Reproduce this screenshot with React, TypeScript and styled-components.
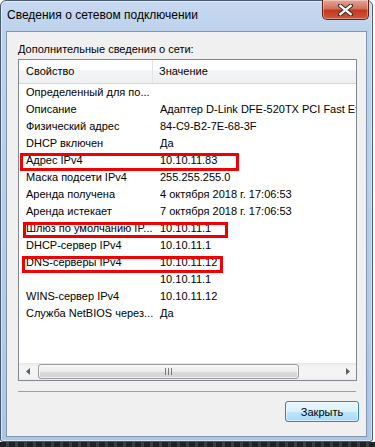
import React from "react";
import styled, { createGlobalStyle } from "styled-components";

const GlobalStyle = createGlobalStyle`
  html, body {
    margin: 0;
    padding: 0;
  }
  body {
    font-family: "Liberation Sans", Arial, sans-serif;
    font-size: 11px;
    color: #000;
    background: #fff;
  }
`;

const Screen = styled.div`
  width: 375px;
  height: 447px;
  display: flex;
  flex-direction: column;
  background: #fff;
  overflow: hidden;
`;

const Window = styled.div`
  width: 373px;
  height: 442px;
  box-sizing: border-box;
  border: 1px solid #4a5a6e;
  border-radius: 6px 6px 3px 3px;
  background: linear-gradient(to bottom, #c6d9f0 0px, #bed2ec 30px, #aec6e6 100%);
  box-shadow: inset 0 0 0 1px rgba(255, 255, 255, 0.5);
  display: flex;
  flex-direction: column;
`;

const Desktop = styled.div`
  flex: 1;
  background: repeating-linear-gradient(90deg, #1f2226 0 6px, #3a3f44 6px 9px);
`;

const TitleBar = styled.div`
  height: 30px;
  display: flex;
  justify-content: space-between;
  align-items: flex-start;
`;

const Title = styled.div`
  padding: 7px 0 0 6px;
  line-height: 15px;
  font-size: 12px;
  color: #000;
`;

const CloseBox = styled.div`
  width: 47px;
  height: 20px;
  margin: -1px 3px 0 0;
  box-sizing: border-box;
  border: 1px solid #5a231c;
  border-top: none;
  border-radius: 0 0 5px 5px;
  background: linear-gradient(to bottom, #e8a493 0%, #d2705c 45%, #c2391f 55%, #d0583c 100%);
  box-shadow: inset 0 0 0 1px rgba(255, 255, 255, 0.35);
  display: flex;
  align-items: center;
  justify-content: center;
`;

const Client = styled.div`
  flex: 1;
  margin: 0 5px 4px 5px;
  border: 1px solid #8195ad;
  background: #f0f0f0;
  display: flex;
  flex-direction: column;
  padding: 10px 8px 14px 11px;
`;

const Caption = styled.div`
  line-height: 15px;
  margin-bottom: 2px;
`;

const ListBox = styled.div`
  height: 322px;
  margin-right: 1px;
  box-sizing: border-box;
  border: 1px solid #828790;
  background: #fff;
  display: flex;
  flex-direction: column;
`;

const Header = styled.div`
  height: 24px;
  box-sizing: border-box;
  display: flex;
  border-bottom: 1px solid #d5d5d5;
  background: linear-gradient(to bottom, #ffffff 0%, #ffffff 45%, #f3f4f6 46%, #eff0f2 100%);
`;

const HeadCell = styled.div<{ $first?: boolean }>`
  line-height: 23px;
  box-sizing: border-box;
  width: ${(p) => (p.$first ? "134px" : "auto")};
  flex: ${(p) => (p.$first ? "none" : "1")};
  padding-left: ${(p) => (p.$first ? "7px" : "6px")};
  border-right: ${(p) => (p.$first ? "1px solid #e3e5e8" : "none")};
`;

const Body = styled.div`
  flex: 1;
  position: relative;
  overflow: hidden;
`;

const Row = styled.div`
  height: 17px;
  display: flex;
  position: relative;
  white-space: nowrap;
`;

const Cell = styled.div<{ $first?: boolean }>`
  line-height: 17px;
  box-sizing: border-box;
  width: ${(p) => (p.$first ? "134px" : "auto")};
  flex: ${(p) => (p.$first ? "none" : "1")};
  padding-left: ${(p) => (p.$first ? "7px" : "7px")};
  overflow: ${(p) => (p.$first ? "hidden" : "visible")};
`;

const Mark = styled.div<{ $left: number; $width: number; $top: number; $height: number }>`
  position: absolute;
  left: ${(p) => p.$left}px;
  top: ${(p) => p.$top}px;
  width: ${(p) => p.$width}px;
  height: ${(p) => p.$height}px;
  box-sizing: border-box;
  border: 3px solid #f00000;
  pointer-events: none;
`;

const HScroll = styled.div`
  height: 17px;
  display: flex;
  background: linear-gradient(to bottom, #e6e6e6 0%, #f4f4f4 20%, #f4f4f4 80%, #ececec 100%);
`;

const Arrow = styled.div`
  width: 17px;
  display: flex;
  align-items: center;
  justify-content: center;
`;

const Track = styled.div`
  flex: 1;
  display: flex;
  align-items: center;
  padding-left: 2px;
`;

const Thumb = styled.div<{ $width: number }>`
  width: ${(p) => p.$width}px;
  height: 15px;
  box-sizing: border-box;
  border: 1px solid #9b9b9b;
  border-radius: 3px;
  background: linear-gradient(to bottom, #f5f5f5 0%, #ececec 50%, #dadada 51%, #d3d3d3 100%);
  box-shadow: inset 0 0 0 1px rgba(255, 255, 255, 0.7);
  display: flex;
  align-items: center;
  justify-content: center;
`;

const Grip = styled.div`
  width: 7px;
  height: 7px;
  background: repeating-linear-gradient(90deg, #7a7a7a 0 1px, transparent 1px 3px);
`;

const Separator = styled.div`
  height: 1px;
  margin: 10px 2px 0 0;
  background: #a0a0a0;
`;

const Footer = styled.div`
  display: flex;
  justify-content: flex-end;
  margin-top: 9px;
`;

const Button = styled.button`
  width: 74px;
  height: 21px;
  margin-right: -1px;
  box-sizing: border-box;
  border: 1px solid #3c7fb1;
  border-radius: 3px;
  background: linear-gradient(to bottom, #eaf6fd 0%, #d9f0fc 50%, #bee6fd 51%, #a7d9f5 100%);
  box-shadow: inset 0 0 0 1px rgba(255, 255, 255, 0.6);
  font-family: inherit;
  font-size: 11px;
  color: #000;
  padding: 0;
  line-height: 18px;
`;

type Entry = { name: string; value: string };

const rows: Entry[] = [
  { name: "Определенный для по...", value: "" },
  { name: "Описание", value: "Адаптер D-Link DFE-520TX PCI Fast Ethernet Adapter" },
  { name: "Физический адрес", value: "84-C9-B2-7E-68-3F" },
  { name: "DHCP включен", value: "Да" },
  { name: "Адрес IPv4", value: "10.10.11.83" },
  { name: "Маска подсети IPv4", value: "255.255.255.0" },
  { name: "Аренда получена", value: "4 октября 2018 г. 17:06:53" },
  { name: "Аренда истекает", value: "7 октября 2018 г. 17:06:53" },
  { name: "Шлюз по умолчанию IP...", value: "10.10.11.1" },
  { name: "DHCP-сервер IPv4", value: "10.10.11.1" },
  { name: "DNS-серверы IPv4", value: "10.10.11.12" },
  { name: "", value: "10.10.11.1" },
  { name: "WINS-сервер IPv4", value: "10.10.11.12" },
  { name: "Служба NetBIOS через...", value: "Да" },
];

// red annotation frames, keyed by row index
const marks: Record<number, { left: number; top: number; width: number; height: number }> = {
  4: { left: 1, top: 1, width: 219, height: 18 },
  8: { left: 4, top: 2, width: 205, height: 16 },
  10: { left: 3, top: 2, width: 201, height: 17 },
};

const CloseGlyph = () => (
  <svg width="15" height="12" viewBox="0 0 15 12">
    <path
      d="M2 1.5 L13 10.5 M13 1.5 L2 10.5"
      stroke="#3a2a2a"
      strokeWidth="4.2"
      strokeLinecap="square"
      fill="none"
    />
    <path
      d="M2.4 1.9 L12.6 10.1 M12.6 1.9 L2.4 10.1"
      stroke="#ffffff"
      strokeWidth="2.4"
      strokeLinecap="square"
      fill="none"
    />
  </svg>
);

const ArrowLeft = () => (
  <svg width="4" height="7" viewBox="0 0 4 7">
    <polygon points="4,0 0,3.5 4,7" fill="#5f5f5f" />
  </svg>
);

const ArrowRight = () => (
  <svg width="4" height="7" viewBox="0 0 4 7">
    <polygon points="0,0 4,3.5 0,7" fill="#5f5f5f" />
  </svg>
);

const App = () => {
  return (
    <Screen>
      <GlobalStyle />
      <Window>
        <TitleBar>
          <Title>Сведения о сетевом подключении</Title>
          <CloseBox>
            <CloseGlyph />
          </CloseBox>
        </TitleBar>
        <Client>
          <Caption>Дополнительные сведения о сети:</Caption>
          <ListBox>
            <Header>
              <HeadCell $first>Свойство</HeadCell>
              <HeadCell>Значение</HeadCell>
            </Header>
            <Body>
              {rows.map((r, i) => (
                <Row key={i}>
                  <Cell $first>{r.name}</Cell>
                  <Cell>{r.value}</Cell>
                  {marks[i] && (
                    <Mark
                      $left={marks[i].left}
                      $top={marks[i].top}
                      $width={marks[i].width}
                      $height={marks[i].height}
                    />
                  )}
                </Row>
              ))}
            </Body>
            <HScroll>
              <Arrow>
                <ArrowLeft />
              </Arrow>
              <Track>
                <Thumb $width={261}>
                  <Grip />
                </Thumb>
              </Track>
              <Arrow>
                <ArrowRight />
              </Arrow>
            </HScroll>
          </ListBox>
          <Separator />
          <Footer>
            <Button>Закрыть</Button>
          </Footer>
        </Client>
      </Window>
      <Desktop />
    </Screen>
  );
};

export default App;
